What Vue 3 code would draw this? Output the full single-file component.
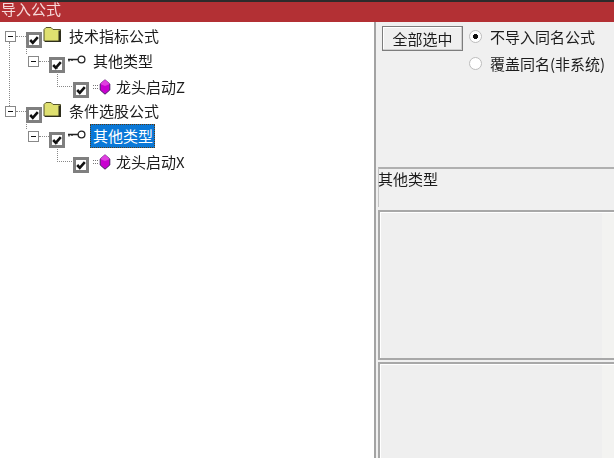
<script setup>
const rows = [
  { id: 1, depth: 0, exp: true, icon: 'folder', label: '技术指标公式' },
  { id: 2, depth: 1, exp: true, icon: 'key', label: '其他类型' },
  { id: 3, depth: 2, exp: false, icon: 'gem', label: '龙头启动Z' },
  { id: 4, depth: 0, exp: true, icon: 'folder', label: '条件选股公式' },
  { id: 5, depth: 1, exp: true, icon: 'key', label: '其他类型', selected: true },
  { id: 6, depth: 2, exp: false, icon: 'gem', label: '龙头启动X' },
]
</script>

<template>
  <div class="window">
    <div class="strip"></div>
    <header class="title"><span>导入公式</span></header>
    <main class="body">
      <section class="tree">
        <i class="guide root"></i>
        <div v-for="r in rows" :key="r.id" class="row" :class="'d' + r.depth">
          <span class="slot">
            <span v-if="r.exp" class="exp"></span>
            <i v-if="r.depth === 2" class="elbow"></i>
            <i v-if="r.exp" class="dash"></i>
            <i v-if="r.depth === 1" class="stem"></i>
          </span>
          <svg class="check" viewBox="0 0 16 16" width="16" height="16">
            <rect x="1.5" y="1.5" width="13" height="13" fill="#fff" stroke="#7f7f7f" stroke-width="3" />
            <path d="M4.2 8l2.600 2.800L11.800 5.200" fill="none" stroke="#111" stroke-width="2.600" />
          </svg>
          <svg v-if="r.icon === 'folder'" class="icon folder" viewBox="0 0 19 17" width="19" height="17">
            <path d="M1 15V3.500L3 1.500h5l2 2h7.500V15z" fill="#dfe070" stroke="#55552a" stroke-width="1" />
            <path d="M15.500 4.500h2.500V16H2v-1h13.500z" fill="#2e2e1c" />
          </svg>
          <svg v-else-if="r.icon === 'key'" class="icon key" viewBox="0 0 19 12" width="19" height="12">
            <circle cx="14.500" cy="5.500" r="3.400" fill="#fff" stroke="#222" stroke-width="1.300" />
            <path d="M1 5.500h10M2 5.500v2M5 5.500v1.500" fill="none" stroke="#222" stroke-width="1.300" />
          </svg>
          <svg v-else class="icon gem" viewBox="0 0 19 16" width="19" height="16">
            <path d="M1 6.500h1M3 6.500h1M5 6.500h1M1 9.500h1M3 9.500h1M5 9.500h1" stroke="#777" stroke-width="1" fill="none" />
            <path d="M13 0.800l4.800 4.200v6L13 15.200 8.200 11V5z" fill="#c800d0" stroke="#4a1f66" stroke-width="1" />
            <path d="M13 0.800L8.200 5l4.800 2 4.800-2z" fill="#e040e0" />
          </svg>
          <span class="label" :class="{ selected: r.selected }">{{ r.label }}</span>
        </div>
      </section>

      <aside class="side">
        <div class="controls">
          <button class="all" type="button">全部选中</button>
          <div class="radios">
            <label class="radio"><span class="dot on"></span>不导入同名公式</label>
            <label class="radio"><span class="dot"></span>覆盖同名(非系统)</label>
          </div>
        </div>
        <div class="info"><span>其他类型</span></div>
        <div class="panel mid"></div>
        <div class="panel low"></div>
      </aside>
    </main>
  </div>
</template>

<style>
html, body { margin: 0; background: #fff; overflow: hidden; }
</style>

<style scoped>
.window {
  width: 614px;
  height: 458px;
  display: flex;
  flex-direction: column;
  overflow: hidden;
  font-family: "Noto Sans CJK SC", "Liberation Sans", sans-serif;
  font-size: 15px;
  color: #1c1c1c;
  filter: blur(0.4px);
}
.strip { height: 2px; background: #2d2b2b; flex: none; }
.title {
  height: 20px;
  flex: none;
  background: #b33034;
  color: #f6d9d9;
  line-height: 13px;
  padding-left: 1px;
}
.title span { display: block; }
.body { flex: 1; display: flex; min-height: 0; }
.tree {
  width: 374px;
  flex: none;
  background: #fff;
  padding-top: 2px;
  position: relative;
  box-sizing: border-box;
}
.row {
  height: 25px;
  display: flex;
  align-items: center;
  position: relative;
}
.d0 { padding-left: 4px; }
.d1 { padding-left: 27px; }
.d2 { padding-left: 51px; }
.slot { width: 22px; height: 25px; flex: none; position: relative; }
.exp {
  position: absolute;
  left: 1px;
  top: 7px;
  width: 9px;
  height: 9px;
  border: 1px solid #888;
  background: linear-gradient(#111, #111) center / 5px 1px no-repeat #fff;
}
.dash {
  position: absolute;
  left: 12px;
  top: 12px;
  width: 10px;
  border-top: 1px dotted #888;
}
.stem {
  position: absolute;
  left: -1px;
  top: -5px;
  height: 10px;
  border-left: 1px dotted #888;
}
.elbow {
  position: absolute;
  left: 6px;
  top: -6px;
  width: 16px;
  height: 18px;
  border-left: 1px dotted #888;
  border-bottom: 1px dotted #888;
}
.guide.root {
  position: absolute;
  left: 9px;
  top: 20px;
  height: 66px;
  border-left: 1px dotted #888;
}
.check { flex: none; margin-top: 6px; }
.icon { flex: none; }
.folder { margin: -5px 6px 0 1px; }
.key { margin: -3px 6px 0 2px; }
.gem { margin: 0 4px 0 3px; }
.label { line-height: 20px; padding: 2px 1px; margin-top: -2px; white-space: nowrap; }
.d2 .label { margin-top: 0; }
.label.selected {
  background: #0a78d7;
  color: #fff;
  outline: 1px dotted #5b3a12;
  outline-offset: -1px;
  margin-left: -2px;
  padding: 2px 2px 2px 3px;
}
.side {
  flex: 1;
  min-width: 0;
  background: #f0f0f0;
  border-left: 2px solid #a3a3a3;
  padding: 0 0 0 2px;
  display: flex;
  flex-direction: column;
}
.controls {
  height: 145px;
  flex: none;
  display: flex;
  align-items: flex-start;
  padding: 4px 0 0 4px;
  box-sizing: border-box;
}
.all {
  width: 81px;
  height: 25px;
  flex: none;
  padding: 0;
  font: inherit;
  color: inherit;
  background: #efefef;
  border: 1px solid #7d7d7d;
  border-radius: 0;
  box-shadow: inset -1px -1px 0 #cfcfcf, inset 1px 1px 0 #fff;
}
.radios { margin-left: 6px; display: flex; flex-direction: column; gap: 7px; }
.radio { display: flex; align-items: center; height: 20px; white-space: nowrap; }
.dot {
  width: 11px;
  height: 11px;
  border-radius: 50%;
  background: #fff;
  border: 1px solid #bdbdbd;
  margin-right: 8px;
  box-sizing: content-box;
  flex: none;
}
.dot.on { background: radial-gradient(circle, #111 0 2.300px, #fff 2.800px); }
.info {
  height: 38px;
  flex: none;
  border-top: 2px solid #b0b0b0;
  border-left: 1px solid #c4c4c4;
  line-height: 20px;
  margin-bottom: 3px;
}
.info span { display: block; margin-left: -1px; }
.panel {
  border-top: 2px solid #a8a8a8;
  border-left: 2px solid #a8a8a8;
  box-shadow: inset 1px 1px 0 #fff;
  background: linear-gradient(90deg, #efefef 0 222px, #f3f3f1 222px);
}
.mid { height: 146px; flex: none; border-bottom: 2px solid #a8a8a8; margin-bottom: 2px; }
.low { flex: 1; }
</style>
